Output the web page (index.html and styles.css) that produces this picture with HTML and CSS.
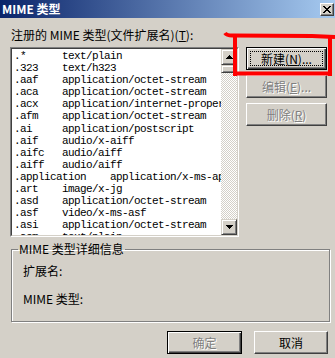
FILE: index.html
```html
<!DOCTYPE html>
<html lang="zh-CN">

<head>
  <meta charset="utf-8">
  <title>MIME 类型</title>
  <link rel="stylesheet" href="styles.css">
</head>

<body>
  <div class="window">
    <div class="titlebar">
      <span class="title">MIME 类型</span>
      <span class="close">
        <svg width="8" height="7" viewBox="0 0 8 7"><path d="M0 0h2v1h1v1h2V1h1V0h2v1H7v1H6v1H5v1h1v1h1v1h1v1H6V6H5V5H3v1H2v1H0V6h1V5h1V4h1V3H2V2H1V1H0z" /></svg>
      </span>
    </div>

    <div class="main">
      <div class="top">
        <div class="listcol">
          <div class="caption">注册的 MIME 类型(文件扩展名)(<u>T</u>):</div>
          <div class="listbox">
            <div class="listframe">
              <div class="rows">
                <div class="row"><span class="ext">.*</span><span>text/plain</span></div>
                <div class="row"><span class="ext">.323</span><span>text/h323</span></div>
                <div class="row"><span class="ext">.aaf</span><span>application/octet-stream</span></div>
                <div class="row"><span class="ext">.aca</span><span>application/octet-stream</span></div>
                <div class="row"><span class="ext">.acx</span><span>application/internet-property-stream</span></div>
                <div class="row"><span class="ext">.afm</span><span>application/octet-stream</span></div>
                <div class="row"><span class="ext">.ai</span><span>application/postscript</span></div>
                <div class="row"><span class="ext">.aif</span><span>audio/x-aiff</span></div>
                <div class="row"><span class="ext">.aifc</span><span>audio/aiff</span></div>
                <div class="row"><span class="ext">.aiff</span><span>audio/aiff</span></div>
                <div class="row"><span class="ext wide">.application</span><span>application/x-ms-application</span></div>
                <div class="row"><span class="ext">.art</span><span>image/x-jg</span></div>
                <div class="row"><span class="ext">.asd</span><span>application/octet-stream</span></div>
                <div class="row"><span class="ext">.asf</span><span>video/x-ms-asf</span></div>
                <div class="row"><span class="ext">.asi</span><span>application/octet-stream</span></div>
                <div class="row"><span class="ext">.asm</span><span>text/plain</span></div>
              </div>
              <div class="vscroll">
                <div class="sb-btn">
                  <svg width="7" height="4" viewBox="0 0 7 4"><path d="M3 0h1v1h1v1h1v1h1v1H0V3h1V2h1V1h1z" /></svg>
                </div>
                <div class="sb-thumb"></div>
                <div class="sb-track"></div>
                <div class="sb-btn">
                  <svg width="7" height="4" viewBox="0 0 7 4"><path d="M0 0h7v1H6v1H5v1H4v1H3V3H2V2H1V1H0z" /></svg>
                </div>
              </div>
            </div>
          </div>
        </div>

        <div class="btncol">
          <button class="btn default focus">新建(<u>N</u>)...</button>
          <button class="btn" disabled>编辑(<u>E</u>)...</button>
          <button class="btn" disabled>删除(<u>R</u>)</button>
        </div>
      </div>

      <fieldset class="details">
        <legend>MIME 类型详细信息</legend>
        <div class="field first">扩展名:</div>
        <div class="field second">MIME 类型:</div>
      </fieldset>

      <div class="actions">
        <button class="btn default ok" disabled>确定</button>
        <button class="btn cancel">取消</button>
      </div>
    </div>

    <!-- hand-drawn highlight round the New button -->
    <svg class="mark" width="335" height="358" viewBox="0 0 335 358">
      <path d="M225 33 Q227 36 234 35.5 L312 36 L335 37" />
      <path d="M235 35 L235 76" />
      <path d="M233 73.5 L332 73.5" />
      <path d="M330 35 L330 76" />
    </svg>
  </div>
</body>

</html>
```

FILE: styles.css
```css
* {
  box-sizing: border-box;
}

body {
  margin: 0;
  background-color: #d4d0c8;
  font-family: "Noto Sans CJK SC", sans-serif;
  font-size: 12px;
  line-height: 12px;
  color: #000;
}

.window {
  position: relative;
  width: 335px;
  height: 358px;
  overflow: hidden;
}

.titlebar {
  height: 18px;
  display: flex;
  align-items: center;
  justify-content: space-between;
  padding: 0 1px 0 2px;
  background: linear-gradient(to right, #0a246a, #a6caf0);
}

.title {
  color: #fff;
  font-weight: bold;
}

.close {
  width: 14px;
  height: 13px;
  display: flex;
  align-items: center;
  justify-content: center;
  background-color: #d4d0c8;
  border: 1px solid;
  border-color: #fff #404040 #404040 #fff;
  box-shadow: inset -1px -1px #808080;
}

.main {
  padding-top: 11px;
}

.top {
  display: flex;
}

.listcol {
  margin-left: 10px;
}

.caption {
  padding-left: 1px;
  height: 12px;
  white-space: nowrap;
}

.listbox {
  margin-top: 6px;
  width: 229px;
  height: 190px;
  border: 1px solid;
  border-color: #808080 #fff #fff #808080;
}

.listframe {
  display: flex;
  height: 100%;
  border: 1px solid;
  border-color: #404040 #d4d0c8 #d4d0c8 #404040;
}

.rows {
  flex: 1;
  overflow: hidden;
  background-color: #fff;
  padding: 1px 0 0 2px;
  font-family: "Liberation Mono", monospace;
  font-size: 11px;
  letter-spacing: -0.6px;
  line-height: 12.1px;
}

.row {
  display: flex;
  white-space: pre;
}

.ext {
  flex: none;
  width: 48px;
}

.ext.wide {
  width: 96px;
}

.vscroll {
  width: 16px;
  display: flex;
  flex-direction: column;
}

.sb-btn,
.sb-thumb {
  background-color: #d4d0c8;
  border: 1px solid;
  border-color: #d4d0c8 #404040 #404040 #d4d0c8;
  box-shadow: inset 1px 1px #fff, inset -1px -1px #808080;
}

.sb-btn {
  height: 16px;
  display: flex;
  align-items: center;
  justify-content: center;
}

.sb-thumb {
  height: 8px;
}

.sb-track {
  flex: 1;
  background-image: conic-gradient(#fff 25%, #d4d0c8 0 50%, #fff 0 75%, #d4d0c8 0);
  background-size: 2px 2px;
}

.btncol {
  margin-left: 7px;
  padding-top: 18px;
  display: flex;
  flex-direction: column;
  gap: 5px;
}

.btn {
  width: 81px;
  height: 23px;
  padding: 0;
  display: flex;
  align-items: center;
  justify-content: center;
  font-family: "Noto Sans CJK SC", sans-serif;
  font-size: 12px;
  line-height: 12px;
  color: #000;
  background-color: #d4d0c8;
  border: 1px solid;
  border-color: #fff #404040 #404040 #fff;
  box-shadow: inset -1px -1px #808080;
}

.btn.default {
  border-color: #000;
  box-shadow: inset 1px 1px #fff, inset -1px -1px #404040, inset -2px -2px #808080;
}

.btn:disabled {
  color: #808080;
  text-shadow: 1px 1px 0 #fff;
}

.btn.focus {
  outline: 1px dotted #000;
  outline-offset: -5px;
}

.details {
  margin: 6px 0 0 11px;
  width: 319px;
  height: 79px;
  padding: 0 0 0 6px;
  border: 1px solid #808080;
  box-shadow: inset 1px 1px #fff, 1px 1px #fff;
  min-width: 0;
}

.details legend {
  padding: 0 1px;
  line-height: 12px;
}

.field {
  padding-left: 5px;
}

.field.first {
  margin-top: 10px;
}

.field.second {
  margin-top: 16px;
}

.actions {
  display: flex;
  justify-content: flex-end;
  gap: 12px;
  padding-right: 7px;
  margin-top: 9px;
}

.actions .ok {
  width: 75px;
}

.actions .cancel {
  width: 74px;
}

.mark {
  position: absolute;
  left: 0;
  top: 0;
  pointer-events: none;
}

.mark path {
  fill: none;
  stroke: #f00;
  stroke-width: 4;
}
```
